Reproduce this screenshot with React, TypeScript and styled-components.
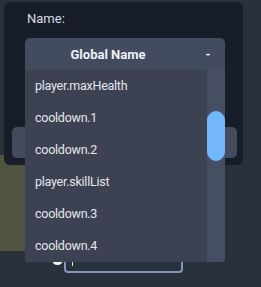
import React from "react";
import styled, { createGlobalStyle } from "styled-components";

const Global = createGlobalStyle`
  html, body { margin: 0; padding: 0; background: #29323c; }
  body { font-family: Roboto, "Liberation Sans", sans-serif; overflow: hidden; }
  * { box-sizing: border-box; }
`;

const Stage = styled.div`
  position: relative;
  width: 261px;
  height: 287px;
  overflow: hidden;
  background: #29323c;
  padding-top: 2px;
`;

const Panel = styled.div`
  position: relative;
  z-index: 2;
  margin-left: 4px;
  width: 239px;
  height: 163px;
  background: #171e29;
  border-radius: 6px;
  padding: 9px 6px 0 8px;
  display: flex;
  flex-direction: column;
`;

const Label = styled.div`
  padding-left: 15px;
  font-size: 13px;
  line-height: 16px;
  color: #d9dce3;
`;

const DropWrap = styled.div`
  position: relative;
  margin: 11px 0 0 13px;
  width: 200px;
  z-index: 5;
`;

const Header = styled.div`
  height: 32px;
  display: flex;
  align-items: center;
  background: #434b5e;
  border-radius: 5px 5px 0 0;
  color: #eef0f5;
  font-size: 13px;
  font-weight: 700;
`;

const HeaderText = styled.span`
  flex: 1;
  text-align: center;
`;

const Dash = styled.span`
  width: 34px;
  text-align: center;
  font-weight: 700;
`;

const List = styled.div`
  position: absolute;
  top: 100%;
  left: 0;
  width: 200px;
  height: 192px;
  display: flex;
  background: #3c4252;
  border-radius: 0 0 3px 3px;
  overflow: hidden;
`;

const Items = styled.div`
  flex: 1;
  display: flex;
  flex-direction: column;
`;

const Item = styled.div`
  height: 32px;
  line-height: 32px;
  padding-left: 10px;
  font-size: 12.5px;
  letter-spacing: -0.25px;
  color: #e3e6ec;
`;

const Track = styled.div`
  width: 18px;
  background: #464e62;
  display: flex;
  flex-direction: column;
`;

const Thumb = styled.div<{ $top: number; $h: number }>`
  margin-top: ${(p) => p.$top}px;
  height: ${(p) => p.$h}px;
  background: #74b7fd;
  border-radius: 9px;
`;

const BackButton = styled.div`
  margin-top: 57px;
  height: 31px;
  width: 225px;
  background: #434b5e;
  border-radius: 5px;
`;

const Olive = styled.div`
  position: relative;
  z-index: 1;
  margin-top: -10px;
  width: 90px;
  height: 96px;
  background: #50533f;
`;

const Row = styled.div`
  display: flex;
  align-items: center;
  padding-left: 52px;
  height: 22px;
`;

const Radio = styled.div`
  width: 11px;
  height: 11px;
  border-radius: 50%;
  background: #f2f3f6;
  margin-bottom: 6px;
`;

const Input = styled.div`
  margin-left: 1px;
  width: 119px;
  height: 22px;
  border: 2px solid #8a93bf;
  border-radius: 4px;
  padding-left: 6px;
  display: flex;
  align-items: center;
`;

const Caret = styled.span`
  width: 1px;
  height: 12px;
  background: #e8eaf0;
  margin-bottom: 4px;
`;

const items = [
  "player.maxHealth",
  "cooldown.1",
  "cooldown.2",
  "player.skillList",
  "cooldown.3",
  "cooldown.4",
];

export default function App() {
  return (
    <>
      <Global />
      <Stage>
        <Panel>
          <Label>Name:</Label>
          <DropWrap>
            <Header>
              <HeaderText>Global Name</HeaderText>
              <Dash>-</Dash>
            </Header>
            <List>
              <Items>
                {items.map((t) => (
                  <Item key={t}>{t}</Item>
                ))}
              </Items>
              <Track>
                <Thumb $top={41} $h={50} />
              </Track>
            </List>
          </DropWrap>
          <BackButton />
        </Panel>
        <Olive />
        <Row>
          <Radio />
          <Input>
            <Caret />
          </Input>
        </Row>
      </Stage>
    </>
  );
}
